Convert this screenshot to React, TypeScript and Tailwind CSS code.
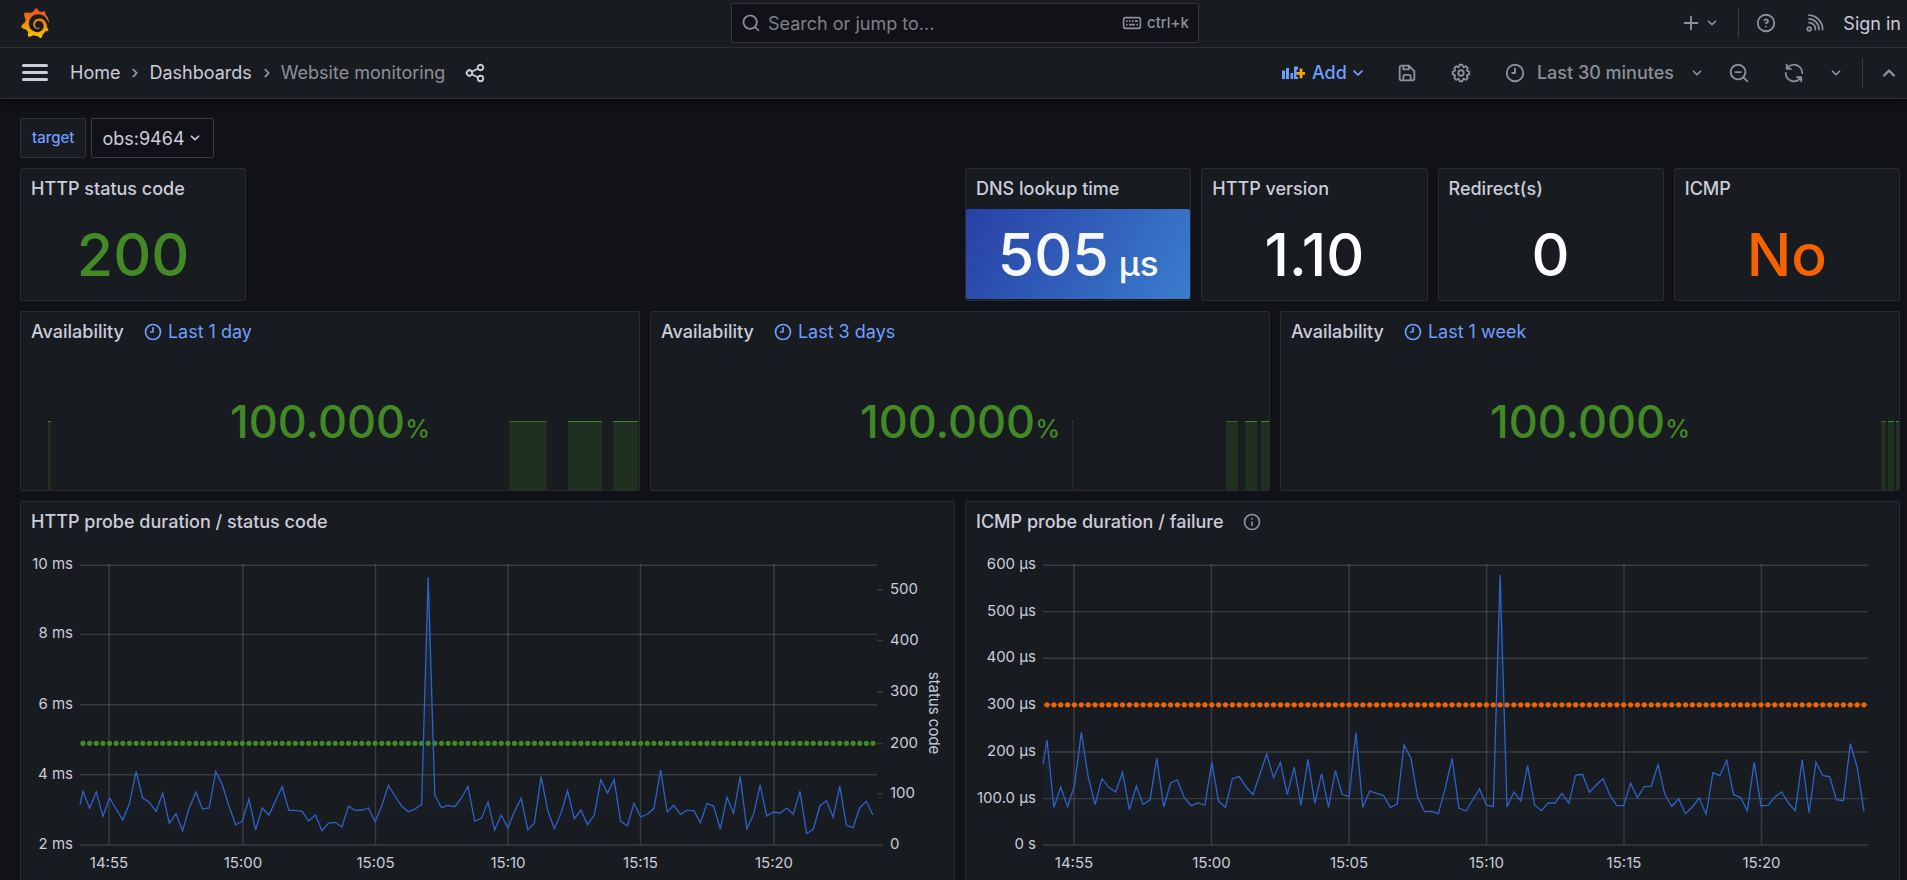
import type { ReactNode } from "react";
import { SiGrafana } from "react-icons/si";

/* ---------- icons ---------- */

const ICONS = {
  angleDown:
    "M17,9.17a1,1,0,0,0-1.41,0L12,12.71,8.46,9.17a1,1,0,0,0-1.41,0,1,1,0,0,0,0,1.42l4.24,4.24a1,1,0,0,0,1.42,0L17,10.59A1,1,0,0,0,17,9.17Z",
  angleUp:
    "M17,13.41,12.71,9.17a1,1,0,0,0-1.42,0L7.05,13.41a1,1,0,0,0,0,1.42,1,1,0,0,0,1.41,0L12,11.29l3.54,3.54a1,1,0,0,0,.7.29,1,1,0,0,0,.71-.29A1,1,0,0,0,17,13.41Z",
  angleRight:
    "M14.83,11.29,10.59,7.05a1,1,0,0,0-1.42,0,1,1,0,0,0,0,1.41L12.71,12,9.17,15.54a1,1,0,0,0,0,1.41,1,1,0,0,0,.71.29,1,1,0,0,0,.71-.29l4.24-4.24A1,1,0,0,0,14.83,11.29Z",
  clock:
    "M12,2A10,10,0,1,0,22,12,10,10,0,0,0,12,2Zm0,18a8,8,0,1,1,8-8A8,8,0,0,1,12,20ZM12,6a1,1,0,0,0-1,1v4H9a1,1,0,0,0,0,2h3a1,1,0,0,0,1-1V7A1,1,0,0,0,12,6Z",
  save: "M20.71,9.29l-6-6a1,1,0,0,0-.32-.21A1.09,1.09,0,0,0,14,3H6A3,3,0,0,0,3,6V18a3,3,0,0,0,3,3H18a3,3,0,0,0,3-3V10A1,1,0,0,0,20.71,9.29ZM9,5h4V7H9Zm6,14H9V16a1,1,0,0,1,1-1h4a1,1,0,0,1,1,1Zm4-1a1,1,0,0,1-1,1H17V16a3,3,0,0,0-3-3H10a3,3,0,0,0-3,3v3H6a1,1,0,0,1-1-1V6A1,1,0,0,1,6,5H7V8A1,1,0,0,0,8,9h6a1,1,0,0,0,1-1V6.41l4,4Z",
  sync: "M19.91,15.51H15.38a1,1,0,0,0,0,2h2.4A8,8,0,0,1,4,12a1,1,0,1,0-2,0,10,10,0,0,0,16.88,7.23V21a1,1,0,0,0,2,0V16.5A1,1,0,0,0,19.91,15.51ZM12,2A10,10,0,0,0,5.12,4.77V3a1,1,0,0,0-2,0V7.5a1,1,0,0,0,1,1h4.5a1,1,0,0,0,0-2H6.22A8,8,0,0,1,20,12a1,1,0,0,0,2,0A10,10,0,0,0,12,2Z",
  search:
    "M21.71,20.29,18,16.61A9,9,0,1,0,16.61,18l3.68,3.68a1,1,0,0,0,1.42,0A1,1,0,0,0,21.71,20.29ZM11,18a7,7,0,1,1,7-7A7,7,0,0,1,11,18Z",
  searchMinus:
    "M21.71,20.29,18,16.61A9,9,0,1,0,16.61,18l3.68,3.68a1,1,0,0,0,1.42,0A1,1,0,0,0,21.71,20.29ZM11,18a7,7,0,1,1,7-7A7,7,0,0,1,11,18Zm3-8H8a1,1,0,0,0,0,2h6a1,1,0,0,0,0-2Z",
  cog: "M21.32,9.55l-1.89-.63.89-1.78A1,1,0,0,0,20.13,6L18,3.87a1,1,0,0,0-1.15-.19l-1.78.89-.63-1.89A1,1,0,0,0,13.5,2h-3a1,1,0,0,0-.95.68L8.92,4.57,7.14,3.68A1,1,0,0,0,6,3.87L3.87,6a1,1,0,0,0-.19,1.15l.89,1.78-1.89.63A1,1,0,0,0,2,10.5v3a1,1,0,0,0,.68.95l1.89.63-.89,1.78A1,1,0,0,0,3.87,18L6,20.13a1,1,0,0,0,1.15.19l1.78-.89.63,1.89a1,1,0,0,0,.95.68h3a1,1,0,0,0,.95-.68l.63-1.89,1.78.89A1,1,0,0,0,18,20.13L20.13,18a1,1,0,0,0,.19-1.15l-.89-1.78,1.89-.63A1,1,0,0,0,22,13.5v-3A1,1,0,0,0,21.32,9.55ZM20,12.78l-1.2.4A2,2,0,0,0,17.64,16l.57,1.14-1.1,1.1L16,17.64a2,2,0,0,0-2.79,1.16l-.4,1.2H11.22l-.4-1.2A2,2,0,0,0,8,17.64l-1.14.57-1.1-1.1L6.36,16A2,2,0,0,0,5.2,13.18L4,12.78V11.22l1.2-.4A2,2,0,0,0,6.36,8L5.79,6.89l1.1-1.1L8,6.36A2,2,0,0,0,10.82,5.2l.4-1.2h1.56l.4,1.2A2,2,0,0,0,16,6.36l1.14-.57,1.1,1.1L17.64,8a2,2,0,0,0,1.16,2.79l1.2.4ZM12,8a4,4,0,1,0,4,4A4,4,0,0,0,12,8Zm0,6a2,2,0,1,1,2-2A2,2,0,0,1,12,14Z",
  share:
    "M18,14a4,4,0,0,0-3.08,1.48l-5.1-2.35a3.64,3.64,0,0,0,0-2.26l5.1-2.35A4,4,0,1,0,14,6a4.17,4.17,0,0,0,.07.71L8.79,9.14a4,4,0,1,0,0,5.72l5.28,2.43A4.17,4.17,0,0,0,14,18a4,4,0,1,0,4-4ZM18,4a2,2,0,1,1-2,2A2,2,0,0,1,18,4ZM6,14a2,2,0,1,1,2-2A2,2,0,0,1,6,14Zm12,6a2,2,0,1,1,2-2A2,2,0,0,1,18,20Z",
  help: "M11.29,15.29a1.58,1.58,0,0,0-.12.15.76.76,0,0,0-.09.18.64.64,0,0,0-.06.18,1.36,1.36,0,0,0,0,.2.84.84,0,0,0,.08.38.9.9,0,0,0,.54.54.94.94,0,0,0,.76,0,.9.9,0,0,0,.54-.54A1,1,0,0,0,13,16a1,1,0,0,0-.29-.71A1,1,0,0,0,11.29,15.29ZM12,2A10,10,0,1,0,22,12,10,10,0,0,0,12,2Zm0,18a8,8,0,1,1,8-8A8,8,0,0,1,12,20ZM12,7A3,3,0,0,0,9.4,8.5a1,1,0,1,0,1.73,1A1,1,0,0,1,12,9a1,1,0,0,1,0,2,1,1,0,1,0,0,2,3,3,0,0,0,0-6Z",
  info: "M12,2A10,10,0,1,0,22,12,10,10,0,0,0,12,2Zm0,18a8,8,0,1,1,8-8A8,8,0,0,1,12,20Zm0-9a1,1,0,0,0-1,1v4a1,1,0,0,0,2,0V12A1,1,0,0,0,12,11Zm0-4a1.1,1.1,0,1,0,1.1,1.1A1.1,1.1,0,0,0,12,7Z",
  plus: "M19,11H13V5a1,1,0,0,0-2,0v6H5a1,1,0,0,0,0,2h6v6a1,1,0,0,0,2,0V13h6a1,1,0,0,0,0-2Z",
};

function Icon({ name, className = "size-[22px]" }: { name: keyof typeof ICONS; className?: string }) {
  return (
    <svg viewBox="0 0 24 24" fill="currentColor" aria-hidden="true" className={`shrink-0 ${className}`}>
      <path d={ICONS[name]} />
    </svg>
  );
}

function RssIcon() {
  return (
    <svg viewBox="0 0 22 22" fill="none" stroke="currentColor" strokeWidth="1.7" strokeLinecap="round" aria-hidden="true" className="size-[22px]">
      <circle cx="5.2" cy="17" r="1.9" />
      <path d="M5 10.6A6.4 6.4 0 0 1 11.4 17.6" />
      <path d="M5 6.9A10.4 10.4 0 0 1 15 17.6" />
      <path d="M5 3.2A14.2 14.2 0 0 1 18.6 17.6" />
    </svg>
  );
}

function KeyboardIcon() {
  return (
    <svg viewBox="0 0 20 14" fill="none" aria-hidden="true" className="h-[14px] w-[20px]">
      <rect x="1.6" y="1.6" width="16.8" height="10.8" rx="1.8" stroke="currentColor" strokeWidth="1.6" />
      <path d="M4 5.2h1.6M7 5.2h1.6M10 5.2h1.6M13 5.2h3M4 8.6h1.6M7 8.6h6M14.4 8.6H16" stroke="currentColor" strokeWidth="1.7" />
    </svg>
  );
}

function AddPanelIcon() {
  return (
    <svg viewBox="0 0 23 14" aria-hidden="true" className="h-[14px] w-[23px]">
      <g fill="#6e9fff">
        <rect x="0" y="4.5" width="3" height="8.5" />
        <rect x="4" y="2" width="3" height="11" />
        <rect x="8.5" y="7" width="2.6" height="6" />
        <path d="M12 0.5h4v3.2h-1.5v7.2h1.5V13h-4z" />
      </g>
      <path d="M19 2.6v9.6M14.2 7.4h8.8" stroke="#f5a30a" strokeWidth="2.8" />
    </svg>
  );
}

function Logo() {
  return (
    <>
      <svg width="0" height="0" aria-hidden="true" className="absolute">
        <linearGradient id="logo-fill" x1="0" y1="1" x2="0" y2="0">
          <stop offset="0" stopColor="#fcc800" />
          <stop offset="0.35" stopColor="#f59a05" />
          <stop offset="1" stopColor="#ea4a25" />
        </linearGradient>
      </svg>
      <SiGrafana className="size-[30px]" style={{ fill: "url(#logo-fill)" }} aria-hidden="true" />
    </>
  );
}

/* ---------- header ---------- */

function TopBar() {
  return (
    <header className="overflow-hidden border-b border-[#2e3035]">
      <div className="-mr-[3px] grid h-[47px] grid-cols-[1.5fr_1fr_1.5fr] items-center gap-[9px] pb-px pl-5">
        <a href="#home" aria-label="Grafana" className="w-fit">
          <Logo />
        </a>
        <label className="flex h-10 items-center gap-[7px] rounded-[2px] border border-[#34363c] bg-[#111217] px-[9px] text-[#8e8f9a]">
          <Icon name="search" className="size-5" />
          <input
            type="text"
            aria-label="Search or jump to"
            placeholder="Search or jump to..."
            className="min-w-0 flex-1 bg-transparent text-[18px] outline-none placeholder:text-[#7f808a]"
          />
          <span className="flex items-center gap-[5px] text-[15px] font-medium">
            <KeyboardIcon />
            ctrl+k
          </span>
        </label>
        <div className="flex items-center justify-end pr-[9px] text-[#8e8f9a]">
          <button type="button" aria-label="New" className="flex items-center">
            <Icon name="plus" />
            <Icon name="angleDown" className="size-5" />
          </button>
          <span className="ml-4 h-[30px] w-px bg-[#3a3c42]" />
          <button type="button" aria-label="Help" className="ml-4">
            <Icon name="help" />
          </button>
          <button type="button" aria-label="News" className="ml-[27px]">
            <RssIcon />
          </button>
          <a href="#login" className="ml-[17px] text-[18px] text-[#ccccdc]">
            Sign in
          </a>
        </div>
      </div>
    </header>
  );
}

function NavBar() {
  return (
    <nav className="flex h-[51px] items-center border-b border-[#2e3035] pb-px pl-[22px] text-[18px] text-[#ccccdc]">
      <button type="button" aria-label="Toggle menu" className="flex w-[26px] flex-col gap-1">
        <span className="h-[3px] rounded-full bg-[#ccccdc]" />
        <span className="h-[3px] rounded-full bg-[#ccccdc]" />
        <span className="h-[3px] rounded-full bg-[#ccccdc]" />
      </button>
      <ol className="ml-[22px] flex items-center">
        <li>
          <a href="#home">Home</a>
        </li>
        <li className="mr-1 ml-[5px] text-[#9a9ba6]">
          <Icon name="angleRight" className="size-5" />
        </li>
        <li>
          <a href="#dashboards">Dashboards</a>
        </li>
        <li className="mr-1 ml-[5px] text-[#9a9ba6]">
          <Icon name="angleRight" className="size-5" />
        </li>
        <li className="text-[#8e8f9a]">Website monitoring</li>
      </ol>
      <button type="button" aria-label="Share dashboard" className="ml-[19px]">
        <Icon name="share" />
      </button>

      <div className="ml-auto flex items-center text-[#8e8f9a]">
        <button type="button" className="mr-[11px] flex items-center font-medium text-[#6e9fff]">
          <AddPanelIcon />
          <span className="ml-[7px]">Add</span>
          <Icon name="angleDown" />
        </button>
        <button type="button" aria-label="Save dashboard" className="flex w-[54px] justify-center">
          <Icon name="save" />
        </button>
        <button type="button" aria-label="Dashboard settings" className="flex w-[54px] justify-center">
          <Icon name="cog" />
        </button>
        <button type="button" className="flex items-center pl-4 font-medium">
          <Icon name="clock" />
          <span className="ml-[11px]">Last 30 minutes</span>
          <Icon name="angleDown" className="mr-[5px] ml-[13px] size-5" />
        </button>
        <button type="button" aria-label="Zoom out time range" className="flex w-[54px] justify-center">
          <Icon name="searchMinus" />
        </button>
        <button type="button" aria-label="Refresh" className="flex w-[55px] justify-center">
          <Icon name="sync" />
        </button>
        <button type="button" aria-label="Refresh interval" className="flex w-[30px] justify-center">
          <Icon name="angleDown" className="size-5" />
        </button>
        <span className="mr-2 ml-[11px] h-[30px] w-px bg-[#3a3c42]" />
        <button type="button" aria-label="Collapse header" className="flex w-9 justify-center">
          <Icon name="angleUp" className="size-7" />
        </button>
      </div>
    </nav>
  );
}

/* ---------- panels ---------- */

function Panel({ title, extra, className, children }: { title: string; extra?: ReactNode; className: string; children: ReactNode }) {
  return (
    <section className={`relative flex min-w-0 flex-col overflow-hidden rounded-[2px] border border-[#2a2c31] bg-[#181b1f] ${className}`}>
      <div className="flex h-10 shrink-0 items-center px-[10px] pb-px text-[18px]">
        <h2 className="font-medium text-[#ccccdc]">{title}</h2>
        {extra}
      </div>
      {children}
    </section>
  );
}

function Stat({ title, value, color, className }: { title: string; value: string; color: string; className: string }) {
  return (
    <Panel title={title} className={className}>
      <div className={`flex h-[91px] items-center justify-center pb-px text-[59px] leading-none font-medium ${color}`}>{value}</div>
    </Panel>
  );
}

type Bar = { x: number; w: number; bright?: boolean };

function Availability({ range, bars }: { range: string; bars: Bar[] }) {
  return (
    <Panel
      title="Availability"
      className="col-span-8"
      extra={
        <span className="ml-[19px] flex items-center gap-[5px] text-[#6e9fff]">
          <Icon name="clock" className="size-5" />
          {range}
        </span>
      }
    >
      <svg viewBox="0 0 618 69" preserveAspectRatio="none" aria-hidden="true" className="absolute inset-x-0 bottom-0 h-[69px] w-full">
        {bars.map((b) => (
          <g key={b.x}>
            <rect x={b.x} y="0" width={b.w} height="69" fill="#203020" />
            <rect x={b.x} y="0" width={b.w} height="1" fill={b.bright ? "#408726" : "#336723"} />
          </g>
        ))}
      </svg>
      <div className="relative flex h-[138px] items-center justify-center text-[#438a26]">
        <p className="text-[45px] leading-none font-medium">
          100.000<span className="text-[25px]">%</span>
        </p>
      </div>
    </Panel>
  );
}

/* ---------- time series ---------- */

type Tick = { at: number; label: string };

type SeriesProps = {
  label: string;
  id: string;
  left: number;
  right: number;
  firstX: number;
  lastX: number;
  start: number;
  // One sample per 15 s, as depth below the top of the plot in thirds of a unit.
  samples: number[];
  xTicks: Tick[];
  yTicks: Tick[];
  rightTicks?: Tick[];
  rightLabel?: string;
  dotY: number;
  dotColor: string;
};

const PLOT_TOP = 23;
const PLOT_BOTTOM = 303;
const SAMPLE_ORIGIN = 223;

const depthToY = (d: number) => PLOT_TOP + (d - SAMPLE_ORIGIN) / 3;

function TimeSeries(p: SeriesProps) {
  const step = (p.lastX - p.firstX) / (p.samples.length - 1);
  const points = [
    `${p.left},${depthToY(p.start).toFixed(1)}`,
    ...p.samples.map((s, i) => `${(p.firstX + i * step).toFixed(1)},${depthToY(s).toFixed(1)}`),
  ].join(" ");
  return (
    <svg viewBox="0 0 933 360" role="img" aria-label={p.label} className="block w-full text-[15px]">
      <defs>
        <linearGradient id={p.id} gradientUnits="userSpaceOnUse" x1="0" y1={PLOT_TOP} x2="0" y2={PLOT_BOTTOM}>
          <stop offset="0" stopColor="#2f60c8" stopOpacity="0.22" />
          <stop offset="1" stopColor="#2f60c8" stopOpacity="0" />
        </linearGradient>
      </defs>
      <g stroke="#f0faff" strokeOpacity="0.15" strokeWidth="1.4">
        {p.yTicks.map((t) => (
          <line key={t.label} x1={p.left} x2={p.right} y1={t.at} y2={t.at} />
        ))}
        {p.xTicks.map((t) => (
          <line key={t.label} x1={t.at} x2={t.at} y1={PLOT_TOP - 1} y2={PLOT_BOTTOM} />
        ))}
        {p.rightTicks?.map((t) => (
          <line key={t.label} x1={p.right} x2={p.right + 6} y1={t.at} y2={t.at} />
        ))}
      </g>
      <g fill="#ccccdc">
        {p.yTicks.map((t) => (
          <text key={t.label} x={p.left - 7} y={t.at + 4} textAnchor="end">
            {t.label}
          </text>
        ))}
        {p.xTicks.map((t) => (
          <text key={t.label} x={t.at} y={PLOT_BOTTOM + 23} textAnchor="middle">
            {t.label}
          </text>
        ))}
        {p.rightTicks?.map((t) => (
          <text key={t.label} x={p.right + 13} y={t.at + 4}>
            {t.label}
          </text>
        ))}
        {p.rightLabel && (
          <text transform="translate(908 171) rotate(90)" textAnchor="middle">
            {p.rightLabel}
          </text>
        )}
      </g>
      <polygon points={`${p.left},${PLOT_BOTTOM} ${points} ${p.lastX},${PLOT_BOTTOM}`} fill={`url(#${p.id})`} />
      <g fill={p.dotColor}>
        {p.samples.map((_, i) => (
          <circle key={i} cx={p.firstX + i * step} cy={p.dotY} r="2.6" />
        ))}
      </g>
      <polyline points={points} fill="none" stroke="#2f62c9" strokeWidth="1.3" />
    </svg>
  );
}

const HTTP_SAMPLES = [
  902, 953, 903, 977, 922, 955, 988, 938, 842, 922, 935, 962, 907, 998, 969, 1020, 952, 905, 955, 952, 842, 883, 947, 1002,
  991, 925, 1018, 952, 973, 930, 888, 959, 959, 962, 991, 973, 1020, 997, 995, 1009, 947, 959, 958, 952, 993, 946, 884, 916,
  946, 963, 955, 941, 260, 913, 951, 944, 948, 922, 887, 991, 983, 934, 1018, 973, 1012, 962, 923, 1018, 997, 858, 958, 1014,
  968, 900, 984, 958, 1002, 974, 867, 907, 867, 992, 1006, 938, 979, 971, 953, 838, 964, 944, 971, 959, 960, 996, 938, 947,
  1015, 920, 968, 858, 1015, 971, 883, 976, 964, 967, 952, 970, 902, 1029, 1015, 946, 930, 980, 886, 1004, 1011, 951, 932, 973,
];

const ICMP_SAMPLES = [
  748, 950, 890, 948, 884, 725, 858, 942, 864, 890, 904, 845, 957, 886, 941, 928, 802, 949, 877, 868, 921, 945, 937, 943,
  815, 932, 950, 864, 857, 889, 912, 851, 790, 861, 815, 912, 829, 944, 806, 938, 849, 950, 840, 911, 918, 726, 950, 901,
  908, 914, 950, 940, 763, 802, 920, 963, 962, 969, 893, 803, 952, 961, 928, 895, 943, 948, 252, 949, 904, 931, 825, 942,
  960, 937, 937, 908, 938, 854, 851, 905, 883, 864, 914, 945, 945, 878, 921, 888, 887, 822, 911, 947, 924, 969, 948, 922,
  971, 846, 855, 809, 912, 920, 960, 815, 945, 944, 920, 904, 937, 960, 807, 967, 815, 855, 858, 927, 930, 759, 828, 963,
];

const TIMES = ["14:55", "15:00", "15:05", "15:10", "15:15", "15:20"];
const ticks = (positions: number[], labels: string[]): Tick[] => positions.map((at, i) => ({ at, label: labels[i] }));

/* ---------- page ---------- */

export default function App() {
  return (
    <div className="flex h-screen flex-col overflow-hidden bg-[#111217] font-['Inter',sans-serif] text-[#ccccdc]">
      <div className="relative z-10 shrink-0 bg-[#181b1f] shadow-[0_1px_10px_rgba(0,0,0,0.8)]">
        <TopBar />
        <NavBar />
      </div>

      <main className="min-h-0 flex-1 overflow-hidden pt-[19px] pr-[7px] pl-5">
        <div className="flex gap-[5px]">
          <label
            htmlFor="target"
            className="flex h-10 items-center rounded-[2px] border border-[#2f3136] bg-[#181b1f] px-[11px] text-[15px] font-medium text-[#6e9fff]"
          >
            target
          </label>
          <div className="relative">
            <select
              id="target"
              className="h-10 w-[123px] appearance-none rounded-[2px] border border-[#3a3c42] bg-[#111217] pl-[10px] text-[18px] text-[#ccccdc]"
            >
              <option>obs:9464</option>
            </select>
            <Icon name="angleDown" className="pointer-events-none absolute top-[10px] right-[9px] size-5" />
          </div>
        </div>

        <div className="mt-[10px] grid grid-cols-24 gap-[10px]">
          <Stat title="HTTP status code" value="200" color="text-[#438a26]" className="col-span-3" />
          <Panel title="DNS lookup time" className="col-span-3 col-start-13">
            <div className="flex h-[90px] items-center justify-center rounded-[2px] bg-[linear-gradient(120deg,#2840a5,#3a7dcd)] text-[#f7f8fa]">
              <p className="text-[59px] leading-none font-medium whitespace-nowrap">
                505<span className="ml-[10px] text-[35px]">µs</span>
              </p>
            </div>
          </Panel>
          <Stat title="HTTP version" value="1.10" color="text-white" className="col-span-3" />
          <Stat title="Redirect(s)" value="0" color="text-white" className="col-span-3" />
          <Stat title="ICMP" value="No" color="text-[#f56200]" className="col-span-3" />

          <Availability
            range="Last 1 day"
            bars={[
              { x: 27, w: 3, bright: true },
              { x: 488, w: 38 },
              { x: 547, w: 34, bright: true },
              { x: 592, w: 25, bright: true },
            ]}
          />
          <Availability
            range="Last 3 days"
            bars={[
              { x: 421, w: 1 },
              { x: 575, w: 12 },
              { x: 594, w: 12, bright: true },
              { x: 610, w: 8, bright: true },
            ]}
          />
          <Availability
            range="Last 1 week"
            bars={[
              { x: 600, w: 5 },
              { x: 607, w: 6, bright: true },
              { x: 615, w: 3, bright: true },
            ]}
          />

          <Panel title="HTTP probe duration / status code" className="col-span-12">
            <TimeSeries
              id="http-fill"
              label="HTTP probe duration and status code"
              left={59}
              right={856}
              firstX={62}
              lastX={852}
              start={941}
              samples={HTTP_SAMPLES}
              xTicks={ticks([88, 222, 354.5, 487, 619.5, 753], TIMES)}
              yTicks={ticks([23.3, 92.4, 162.8, 232.8, 303], ["10 ms", "8 ms", "6 ms", "4 ms", "2 ms"])}
              rightTicks={ticks([48.3, 98.6, 149.8, 201.5, 251.6, 303], ["500", "400", "300", "200", "100", "0"])}
              rightLabel="status code"
              dotY={201.3}
              dotColor="#438a26"
            />
          </Panel>
          <Panel
            title="ICMP probe duration / failure"
            className="col-span-12"
            extra={
              <button type="button" aria-label="Panel description" className="ml-[18px] text-[#8e8f9a]">
                <Icon name="info" className="size-5" />
              </button>
            }
          >
            <TimeSeries
              id="icmp-fill"
              label="ICMP probe duration and failure"
              left={77}
              right={902}
              firstX={81}
              lastX={898}
              start={820}
              samples={ICMP_SAMPLES}
              xTicks={ticks([108, 245.5, 383, 520.5, 658, 795.5], TIMES)}
              yTicks={ticks(
                [23.3, 69.6, 116.2, 162.8, 210, 256.6, 303],
                ["600 µs", "500 µs", "400 µs", "300 µs", "200 µs", "100.0 µs", "0 s"],
              )}
              dotY={162.8}
              dotColor="#f06202"
            />
          </Panel>
        </div>
      </main>
    </div>
  );
}
